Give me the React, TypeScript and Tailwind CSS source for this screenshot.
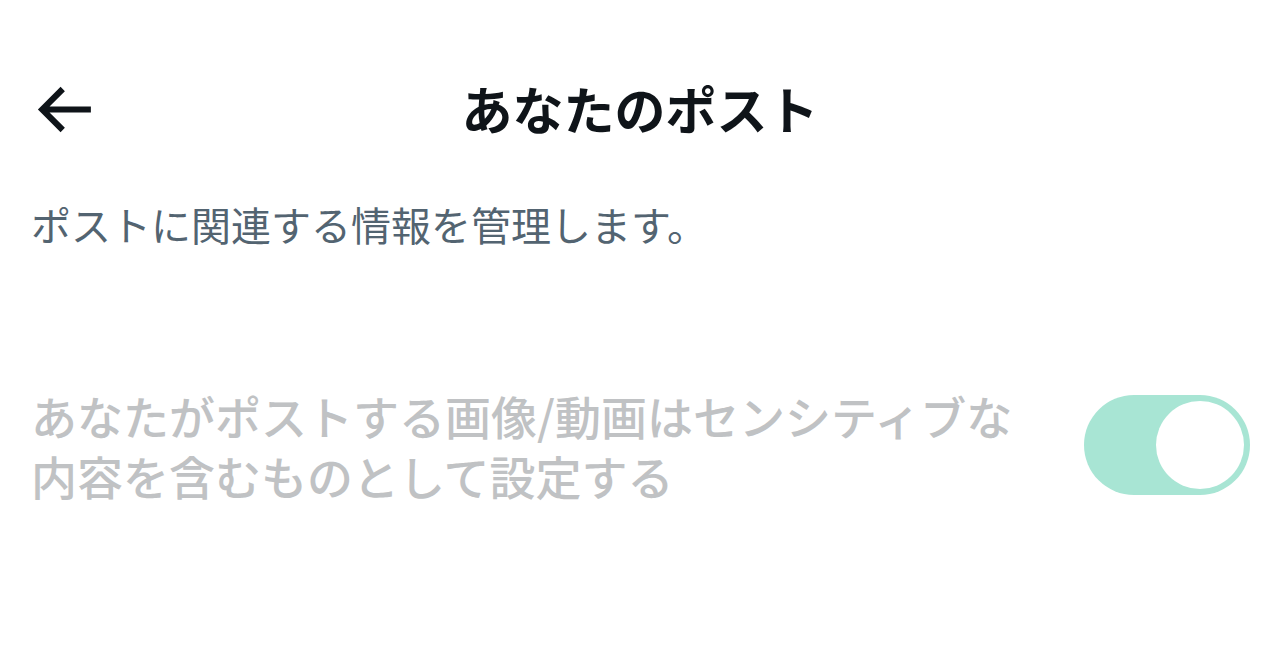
import React from 'react'

const font = { fontFamily: '"Noto Sans CJK JP", "Noto Sans", sans-serif' }

function BackArrow() {
  return (
    <svg viewBox="0 0 24 24" className="w-[73px] h-[73px] fill-[#0f1419]">
      <path d="M7.414 13l5.043 5.04-1.414 1.42L3.586 12l7.457-7.46 1.414 1.42L7.414 11H21v2H7.414z" />
    </svg>
  )
}

function Toggle() {
  // disabled + checked state, so the whole control is washed out
  return (
    <div className="w-[166px] h-[100px] rounded-full bg-[#a8e5d4] flex items-center justify-end pr-[6px]">
      <div className="w-[88px] h-[88px] rounded-full bg-white"></div>
    </div>
  )
}

export default function App() {
  return (
    <div className="w-[1280px] h-[670px] bg-white overflow-hidden" style={font}>
      {/* Header */}
      <div className="pt-[58px]">
        <div className="grid grid-cols-[1fr_auto_1fr] items-center h-[100px]">
          <div className="pl-[27px] pt-[2px] flex items-center">
            <BackArrow />
          </div>
          <h1 className="text-[51px] leading-[60px] font-bold text-[#0f1419]">
            あなたのポスト
          </h1>
          <div></div>
        </div>
      </div>

      {/* Description */}
      <p className="mt-[44px] pl-[31px] text-[40px] leading-[44px] text-[#536471]">
        ポストに関連する情報を管理します。
      </p>

      {/* Setting row */}
      <div className="mt-[139px] pl-[31px] pr-[30px] flex items-center justify-between">
        <label className="text-[46px] leading-[60px] font-medium text-[#c0c2c4]">
          あなたがポストする画像/動画はセンシティブな
          <br />
          内容を含むものとして設定する
        </label>
        <Toggle />
      </div>
    </div>
  )
}
